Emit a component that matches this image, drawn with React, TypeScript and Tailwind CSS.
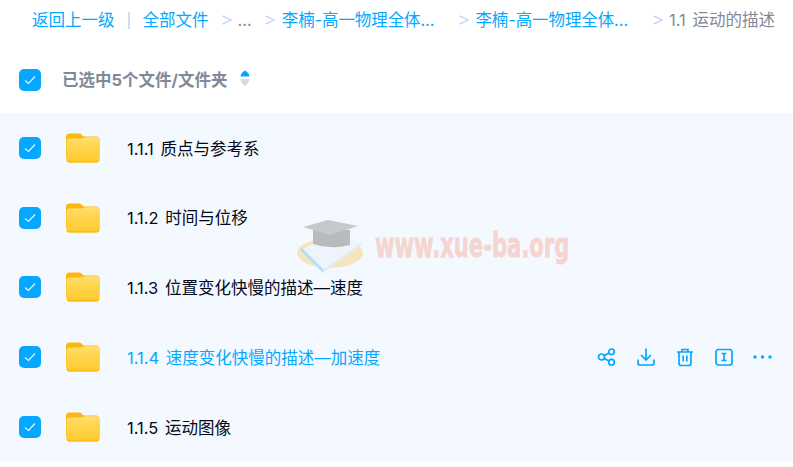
const font = { fontFamily: 'Inter, "Noto Sans CJK SC", sans-serif' };

function Check() {
  return (
    <div className="flex h-[22px] w-[22px] shrink-0 items-center justify-center rounded-[5px] bg-[#06a7ff]">
      <svg width="14" height="12" viewBox="0 0 14 12" fill="none">
        <path d="M2 6.5 L5.5 9.5 L12 2.5" stroke="#e6f6ff" strokeWidth="1.2" />
      </svg>
    </div>
  );
}

function Folder({ id }: { id: string }) {
  return (
    <svg width="34" height="30" viewBox="0 0 34 30" className="shrink-0">
      <defs>
        <linearGradient id={id} x1="0" y1="0" x2="0" y2="1">
          <stop offset="0" stopColor="#ffe27e" />
          <stop offset="0.2" stopColor="#ffd95a" />
          <stop offset="1" stopColor="#ffca2c" />
        </linearGradient>
      </defs>
      <path d="M0 4 Q0 0.5 3.5 0.5 H13 Q15 0.5 16.5 2.5 L17.5 3.5 H30 Q33.5 3.5 33.5 7 V25 H0 Z" fill="#ffb60f" />
      <path d="M0.5 9 Q0.5 6 3 5.5 H14 Q17 5.5 18.5 4.6 L20 4.3 H31 Q33.5 4.8 33.5 7.5 V26 Q33.5 29.5 30 29.5 H3.5 Q0.5 29.5 0.5 26 Z" fill={`url(#${id})`} />
      <path d="M0.5 26.5 Q3 28 5 28 H29 Q32 28 33.5 26.5 Q33.5 29.5 30 29.5 H3.5 Q0.5 29.5 0.5 26.5 Z" fill="#ffba14" />
    </svg>
  );
}

function Sep() {
  return (
    <svg width="10" height="10" viewBox="0 0 10 10" fill="none" className="shrink-0">
      <path d="M0.5 0.8 L9 5 L0.5 9.2" stroke="#bfd5f4" strokeWidth="1.3" />
    </svg>
  );
}

function Actions() {
  const s = { stroke: '#06a7ff', strokeWidth: 1.7, fill: 'none' };
  return (
    <div className="ml-auto mr-[21px] flex items-center gap-[19px]">
      <svg width="20" height="20" viewBox="0 0 20 20" {...s}>
        <circle cx="4.5" cy="10" r="3" />
        <circle cx="14.5" cy="4.8" r="2.8" />
        <circle cx="14.5" cy="15.2" r="2.8" />
        <path d="M7.2 8.6 L12 6.1 M7.2 11.4 L12 13.9" />
      </svg>
      <svg width="20" height="20" viewBox="0 0 20 20" {...s}>
        <path d="M10 1.5 V12.5 M5 8 L10 13 L15 8" />
        <path d="M2 12.5 V16 Q2 18 4 18 H16 Q18 18 18 16 V12.5" />
      </svg>
      <svg width="20" height="20" viewBox="0 0 20 20" {...s}>
        <path d="M2 5 H18 M7 5 V2.5 H13 V5" />
        <path d="M4 5 V16 Q4 18.5 6.5 18.5 H13.5 Q16 18.5 16 16 V5" />
        <path d="M8.2 8.5 V14.5 M11.8 8.5 V14.5" />
      </svg>
      <svg width="20" height="20" viewBox="0 0 20 20" {...s}>
        <rect x="2" y="2.5" width="16" height="15.5" rx="2.5" />
        <path d="M7.5 6.5 H12.5 M7.5 13.5 H12.5 M10 6.5 V13.5" />
      </svg>
      <svg width="19" height="20" viewBox="0 0 19 20" fill="#06a7ff">
        <circle cx="2" cy="10" r="1.7" />
        <circle cx="9.5" cy="10" r="1.7" />
        <circle cx="17" cy="10" r="1.7" />
      </svg>
    </div>
  );
}

function Row({ name, index, active }: { name: string; index: number; active?: boolean }) {
  return (
    <div className="flex h-[69.8px] items-center pl-[19px]">
      <Check />
      <div className="ml-[25px]">
        <Folder id={`folder-${index}`} />
      </div>
      <span className={`ml-[27px] mt-[2px] text-[16.5px] [word-spacing:2px] ${active ? 'text-[#06a7ff]' : 'text-[#03081a]'}`}>{name}</span>
      {active && <Actions />}
    </div>
  );
}

export default function App() {
  const rows = ['1.1.1 质点与参考系', '1.1.2 时间与位移', '1.1.3 位置变化快慢的描述—速度', '1.1.4 速度变化快慢的描述—加速度', '1.1.5 运动图像'];
  return (
    <div className="relative h-[467px] w-[793px] overflow-hidden bg-white" style={font}>
      <div className="flex h-[40px] items-center whitespace-nowrap pl-[32px] text-[16.5px] leading-none">
        <span className="text-[#06a7ff]">返回上一级</span>
        <span className="ml-[13px] h-[17px] w-[2px] bg-[#cfdcf2]" />
        <span className="ml-[13px] text-[#06a7ff]">全部文件</span>
        <span className="ml-[13px]"><Sep /></span>
        <span className="ml-[6px] text-[#818999]">...</span>
        <span className="ml-[13px]"><Sep /></span>
        <span className="ml-[7px] tracking-[-0.1px] text-[#06a7ff]">李楠-高一物理全体...</span>
        <span className="ml-[25px]"><Sep /></span>
        <span className="ml-[6px] tracking-[-0.1px] text-[#06a7ff]">李楠-高一物理全体...</span>
        <span className="ml-[25px]"><Sep /></span>
        <span className="ml-[6px] text-[#818999] [word-spacing:2px]">1.1 运动的描述</span>
      </div>
      <div className="flex h-[73px] items-center pl-[19px] pt-[6px]">
        <Check />
        <span className="ml-[21px] mt-[2px] text-[16.5px] font-bold text-[#818999]">已选中5个文件/文件夹</span>
        <svg width="10" height="17" viewBox="0 0 10 17" className="mb-[2px] ml-[13px]">
          <path d="M0.5 6.5 Q1 2.5 5 0.5 Q9 2.5 9.5 6.5 Z" fill="#06a7ff" />
          <path d="M0.5 9 H9.5 Q9 13 5 16 Q1 13 0.5 9 Z" fill="#d3dae4" />
        </svg>
      </div>
      <div className="bg-[#f3f9ff]">
        {rows.map((r, i) => (
          <Row key={r} name={r} index={i} active={i === 3} />
        ))}
      </div>
      <div className="pointer-events-none absolute left-[297px] top-[218px] flex items-center">
        <svg width="70" height="58" viewBox="0 0 70 58">
          <ellipse cx="33" cy="35" rx="33" ry="15" fill="#f6e5bb" />
          <path d="M3 32 L26 55 L66 25 L50 20 L16 26 Z" fill="#eef4fb" />
          <path d="M3 32 L26 55 L28 53 L5 30 Z" fill="#b9dcf3" />
          <path d="M26 55 L66 25 L64 25 L26 52 Z" fill="#dcecf8" />
          <path d="M16 12 V26 Q34 32 53 27 V12 Z" fill="#b8bbbd" />
          <path d="M6 9 L31 2 L61 8 L33 17 Z" fill="#c6c9cb" />
        </svg>
        <span
          className="mb-[4px] ml-[8px] origin-left scale-x-[0.64] text-[33px] font-bold leading-none text-[#f5d5cf] blur-[0.5px] [-webkit-text-stroke:1px_#f5d5cf]"
          style={{ fontFamily: '"DejaVu Sans", sans-serif' }}
        >
          www.xue-ba.org
        </span>
      </div>
    </div>
  );
}
